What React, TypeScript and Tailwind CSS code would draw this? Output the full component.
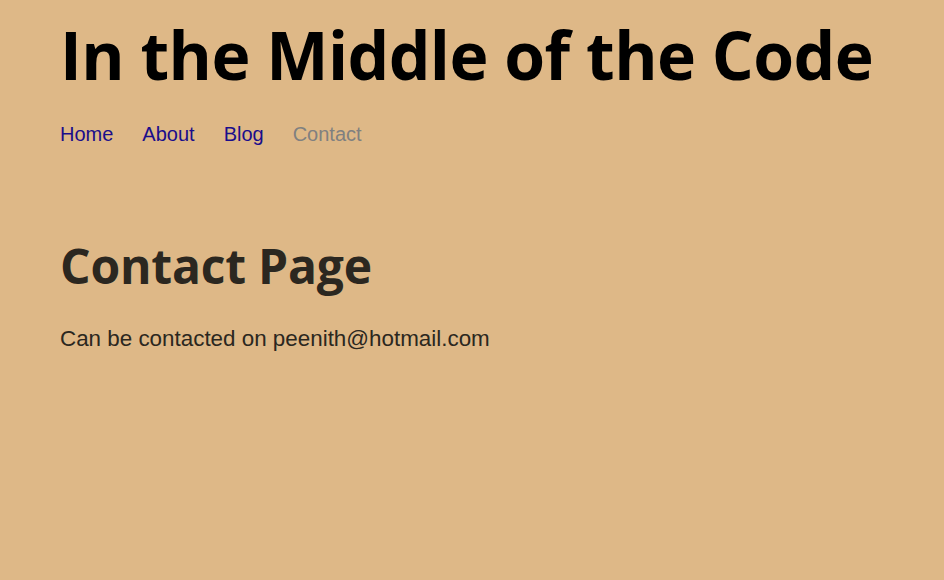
export default function App() {
  return (
    <div className="min-h-[580px] w-full bg-[#deb887]">
      <div className="px-[60px]">
        <h1 className="pt-[14px] text-[66px] leading-[80px] font-bold text-black tracking-[-0.6px]" style={{ fontFamily: '"Open Sans", sans-serif' }}>
          In the Middle of the Code
        </h1>
        <nav className="mt-[28px] flex gap-[29px] text-[20px] leading-[24px]" style={{ fontFamily: '"Liberation Sans", Arial, sans-serif' }}>
          <a className="text-[#1a0d8b]">Home</a>
          <a className="text-[#1a0d8b]">About</a>
          <a className="text-[#1a0d8b]">Blog</a>
          <a className="text-[#808080]">Contact</a>
        </nav>
        <h2 className="mt-[90px] text-[48px] leading-[60px] font-bold text-[#2b2720] tracking-[-0.2px]" style={{ fontFamily: '"Open Sans", sans-serif' }}>
          Contact Page
        </h2>
        <p className="mt-[29px] text-[22.4px] leading-[28px] text-[#2b2720]" style={{ fontFamily: '"Liberation Sans", Arial, sans-serif' }}>
          Can be contacted on peenith@hotmail.com
        </p>
      </div>
    </div>
  );
}
